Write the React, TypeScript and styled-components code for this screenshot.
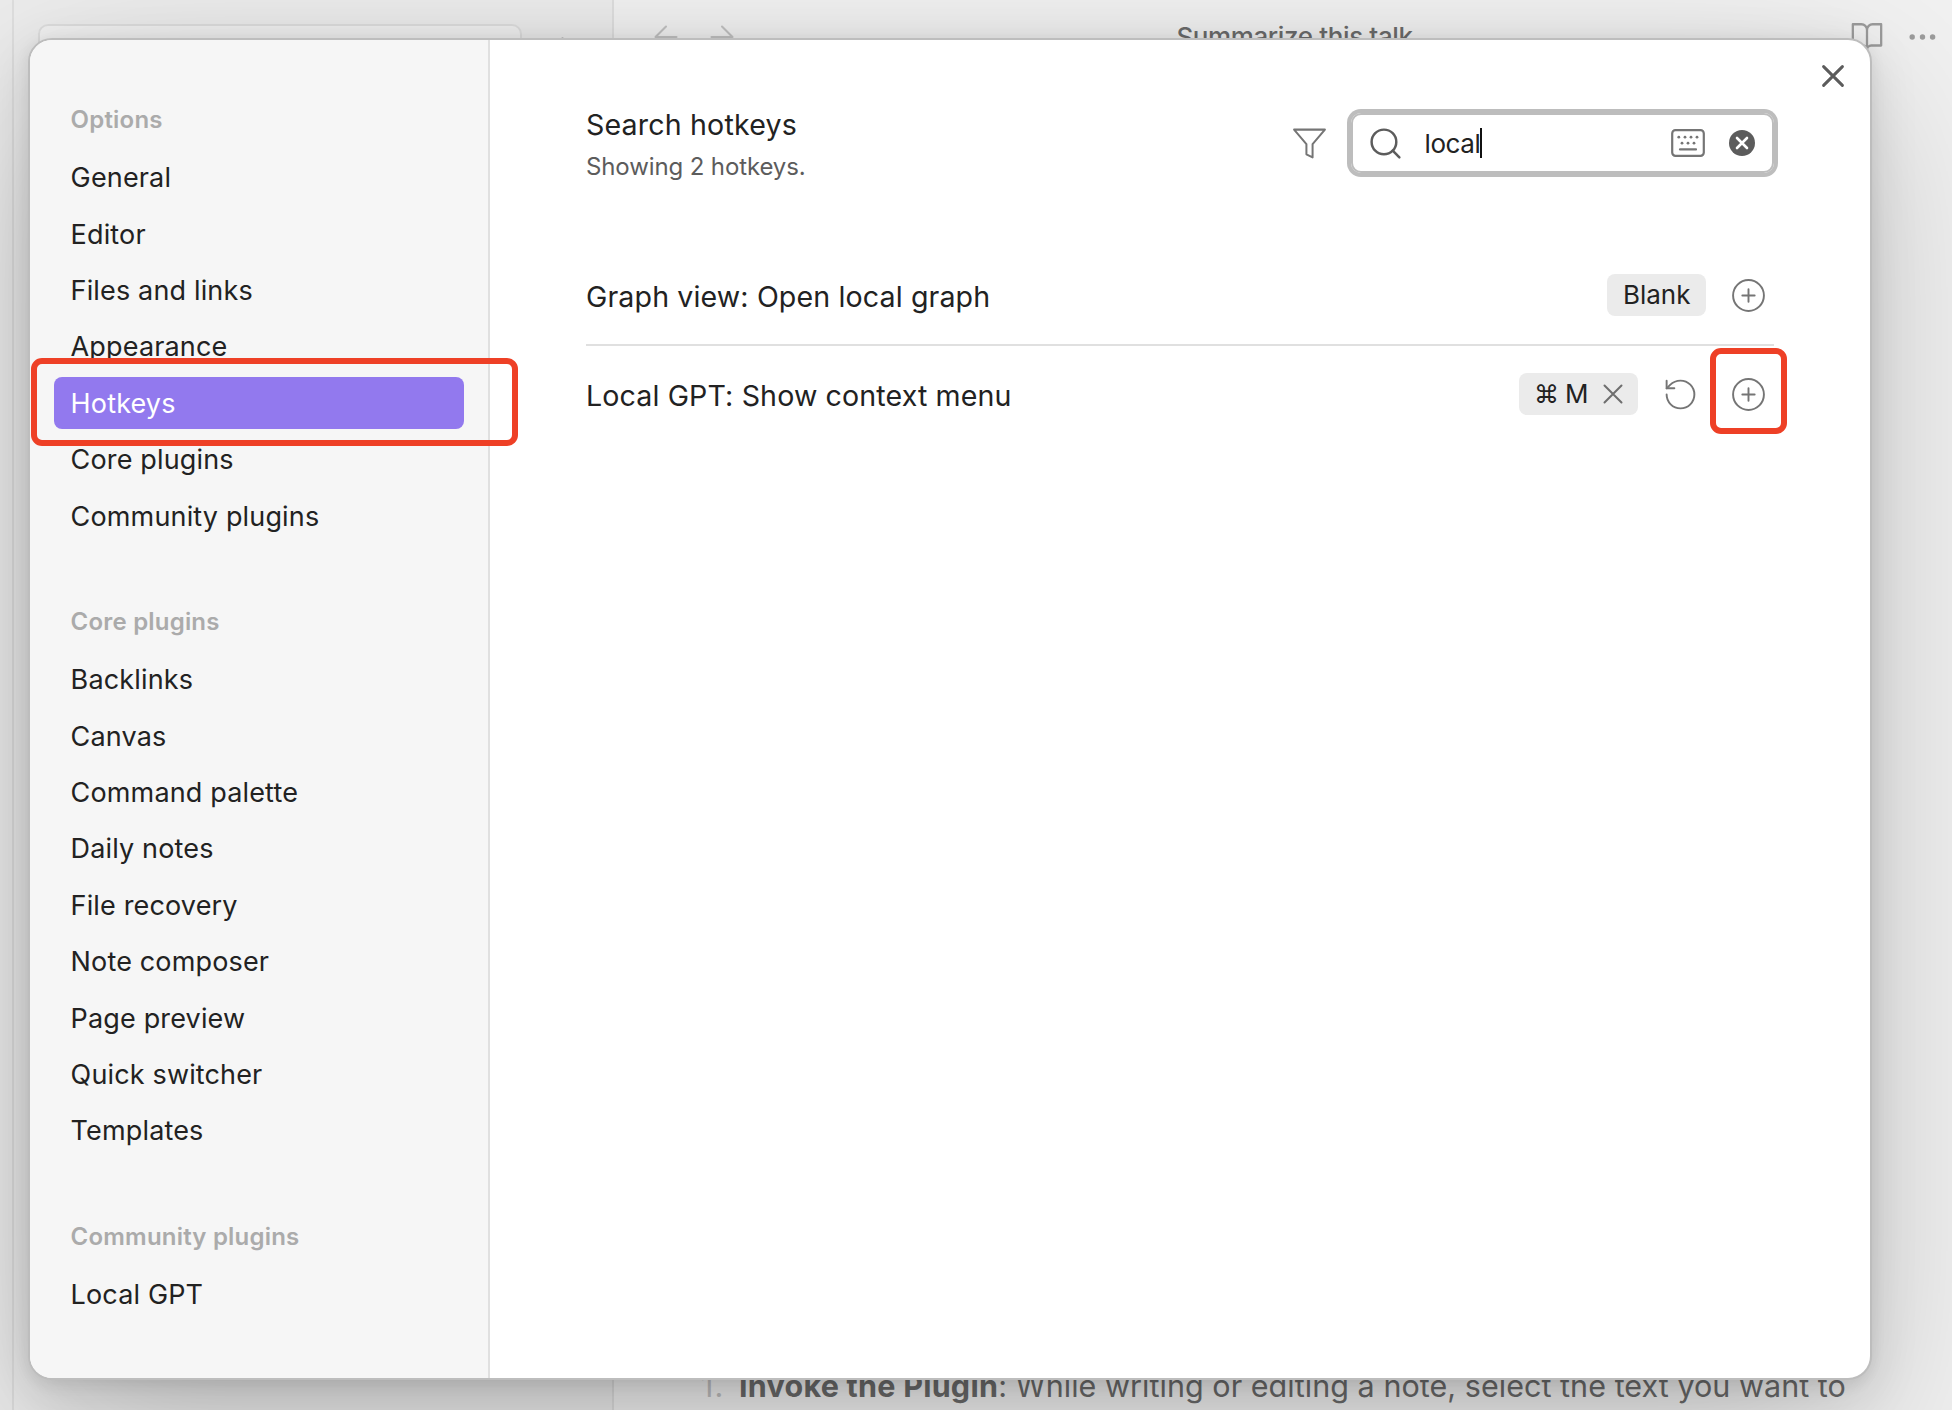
import React from 'react';
import styled, { createGlobalStyle } from 'styled-components';

const GlobalStyle = createGlobalStyle`
  *, *::before, *::after { box-sizing: border-box; }
  html, body { margin: 0; padding: 0; overflow: hidden; }
  body {
    font-family: Inter, "Liberation Sans", sans-serif;
    color: #222222;
    -webkit-font-smoothing: antialiased;
  }
  svg { display: block; flex: none; }
`;

/* ---------- workspace behind the dialog ---------- */

const Screen = styled.div`
  position: relative;
  width: 1952px;
  height: 1410px;
  overflow: hidden;
`;

const Workspace = styled.div`
  display: flex;
  height: 100%;
  background: #f1f1f1;
`;

const Ribbon = styled.div`
  width: 14px;
  background: #ececec;
  border-right: 2px solid #dedede;
`;

const FilePane = styled.div`
  display: flex;
  align-items: flex-start;
  gap: 32px;
  width: 600px;
  padding: 24px 0 0 24px;
  background: #ececec;
  border-right: 2px solid #dedede;
`;

const FileSearch = styled.div`
  width: 484px;
  height: 56px;
  border: 2px solid #dedede;
  border-radius: 10px;
  background: #f1f1f1;
`;

const CaseIcon = styled.svg`
  margin-top: 13px;
`;

const NotePane = styled.div`
  display: flex;
  flex: 1;
  flex-direction: column;
  justify-content: space-between;
`;

const NoteHeader = styled.div`
  display: flex;
  align-items: center;
  height: 74px;
  padding: 0 15px 0 34px;
`;

const NavArrows = styled.div`
  display: flex;
  gap: 20px;
  color: #c2c2c2;
`;

const NoteTitle = styled.div`
  flex: 1;
  margin-top: -1px;
  padding-right: 1px;
  text-align: center;
  font-size: 26px;
  font-weight: 500;
  letter-spacing: -0.38px;
  line-height: 36px;
  color: #6c6c6c;
`;

const NoteActions = styled.div`
  display: flex;
  align-items: center;
  gap: 23px;
  color: #9c9c9c;
`;

const NoteLine = styled.p`
  display: flex;
  margin: 0;
  padding-left: 87px;
  font-size: 30.5px;
  line-height: 49px;
  letter-spacing: 0.04px;
  white-space: pre;
  color: #6c6c6c;
`;

const ListNumber = styled.span`
  width: 38px;
  letter-spacing: 1.2px;
  color: #c0c0c0;
`;

const Strong = styled.strong`
  font-weight: 700;
  letter-spacing: 0.24px;
`;

/* ---------- dialog ---------- */

const Dialog = styled.div`
  position: absolute;
  left: 28px;
  top: 38px;
  display: flex;
  width: 1844px;
  height: 1342px;
  overflow: hidden;
  border: 2px solid #bdbdbd;
  border-radius: 24px;
  background: #ffffff;
  box-shadow:
    0 3.6px 14.6px rgba(0, 0, 0, 0.071),
    0 12.6px 49.4px rgba(0, 0, 0, 0.112),
    0 60px 180px rgba(0, 0, 0, 0.2);
`;

const Sidebar = styled.nav`
  display: flex;
  flex-direction: column;
  gap: 63.5px;
  width: 460px;
  padding: 63px 24px 0;
  background: #f6f6f6;
  border-right: 2px solid #e0e0e0;
`;

const Group = styled.section`
  display: flex;
  flex-direction: column;
  gap: 4.4px;
`;

const GroupTitle = styled.h2`
  height: 32px;
  margin: 0 0 11.8px;
  padding: 1px 0 0 16.6px;
  font-size: 24px;
  font-weight: 600;
  line-height: 32px;
  letter-spacing: 0.2px;
  color: #ababab;
`;

const Item = styled.div<{ $active?: boolean }>`
  height: 52px;
  padding: 1px 0 0 16.6px;
  border-radius: 8px;
  font-size: 27px;
  line-height: 52px;
  letter-spacing: 0.15px;
  color: ${p => (p.$active ? '#ffffff' : '#222222')};
  background: ${p => (p.$active ? '#9279ee' : 'transparent')};
`;

const Content = styled.main`
  display: flex;
  flex: 1;
  flex-direction: column;
  padding: 69px 96px 0;
`;

const SearchRow = styled.div`
  display: flex;
  align-items: center;
  height: 138px;
  padding-bottom: 70px;
`;

const SearchInfo = styled.div`
  flex: 1;
  padding-top: 3px;
`;

const SearchTitle = styled.div`
  font-size: 28.6px;
  line-height: 40px;
  letter-spacing: 0.16px;
`;

const SearchHint = styled.div`
  margin-top: 4px;
  font-size: 24px;
  line-height: 36px;
  letter-spacing: -0.12px;
  color: #5c5c5c;
`;

const FilterButton = styled.div`
  margin-right: 23.5px;
  color: #757575;
`;

const SearchField = styled.div`
  display: flex;
  align-items: center;
  width: 423px;
  height: 60px;
  padding: 0 17px 0 13.5px;
  border: 2px solid #bdbdbd;
  border-radius: 10px;
  box-shadow: 0 0 0 4px #bdbdbd;
`;

const SearchIcon = styled.div`
  color: #5c5c5c;
`;

const Query = styled.span`
  margin-left: 21px;
  padding-top: 2px;
  font-size: 26px;
  line-height: 36px;
  letter-spacing: -0.4px;
`;

const Caret = styled.span`
  width: 2px;
  height: 30px;
  background: #111111;
`;

const FieldIcons = styled.div`
  display: flex;
  align-items: center;
  gap: 24px;
  margin-left: auto;
`;

const HotkeyRow = styled.div<{ $divided?: boolean }>`
  display: flex;
  align-items: center;
  gap: 24px;
  height: ${p => (p.$divided ? 99 : 97)}px;
  padding: 0 7.5px 1px 0;
  border-top: ${p => (p.$divided ? '2px solid #e0e0e0' : '0')};
`;

const HotkeyList = styled.div`
  display: flex;
  flex-direction: column;
`;

const HotkeyName = styled.div`
  flex: 1;
  padding-top: 3px;
  font-size: 28.6px;
  line-height: 40px;
  letter-spacing: 0.12px;
`;

const RowActions = styled.div`
  display: flex;
  gap: 31px;
  color: #757575;
`;

const Chip = styled.div`
  display: flex;
  align-items: center;
  height: 42px;
  padding: 0 15px 0 15.5px;
  border-radius: 8px;
  background: #ebebeb;
  font-size: 26px;
  line-height: 42px;
`;

const KeyGlyph = styled.span`
  width: 31px;
  font-size: 25px;
`;

const ChipClose = styled.svg`
  margin-left: 14px;
`;

const CloseButton = styled.div`
  position: absolute;
  top: 24px;
  right: 25px;
  color: #5c5c5c;
`;

const Highlight = styled.div<{ $x: number; $y: number; $w: number; $h: number }>`
  position: absolute;
  left: ${p => p.$x}px;
  top: ${p => p.$y}px;
  width: ${p => p.$w}px;
  height: ${p => p.$h}px;
  border: 6px solid #ee4026;
  border-radius: 11px;
`;

/* ---------- icons ---------- */

type IconProps = { size?: number; weight?: number; children: React.ReactNode };

const Icon = ({ size = 37, weight = 1.25, children }: IconProps) => (
  <svg
    width={size}
    height={size}
    viewBox="0 0 24 24"
    fill="none"
    stroke="currentColor"
    strokeWidth={weight}
    strokeLinecap="round"
    strokeLinejoin="round"
  >
    {children}
  </svg>
);

const PlusCircle = () => (
  <Icon>
    <circle cx="12" cy="12" r="10" />
    <path d="M8 12h8M12 8v8" />
  </Icon>
);

const Restore = () => (
  <Icon>
    <path d="M3 12a9 9 0 1 0 9-9 9.75 9.75 0 0 0-6.74 2.74L3 8" />
    <path d="M3 3v5h5" />
  </Icon>
);

const KeyboardIcon = () => (
  <svg width="34" height="28" viewBox="0 0 34 28" fill="none" stroke="#757575">
    <rect x="1.2" y="1.2" width="31.6" height="25.6" rx="3.2" strokeWidth="2.2" />
    <path d="M9 20.4h16" strokeWidth="2.2" strokeLinecap="round" />
    <g fill="#757575" stroke="none">
      {[7.8, 14, 20, 26].map(x => <circle key={x} cx={x} cy="8.2" r="1.4" />)}
      {[11, 17, 23].map(x => <circle key={x} cx={x} cy="14.2" r="1.4" />)}
    </g>
  </svg>
);

const ClearIcon = () => (
  <svg width="26" height="26" viewBox="0 0 26 26">
    <circle cx="13" cy="13" r="13" fill="#5c5c5c" />
    <path d="M8 8l10 10M18 8L8 18" stroke="#fff" strokeWidth="2.6" strokeLinecap="round" />
  </svg>
);

/* ---------- data ---------- */

const groups = [
  {
    title: 'Options',
    items: ['General', 'Editor', 'Files and links', 'Appearance', 'Hotkeys', 'Core plugins', 'Community plugins'],
  },
  {
    title: 'Core plugins',
    items: [
      'Backlinks', 'Canvas', 'Command palette', 'Daily notes', 'File recovery',
      'Note composer', 'Page preview', 'Quick switcher', 'Templates',
    ],
  },
  { title: 'Community plugins', items: ['Local GPT'] },
];

export default function App() {
  return (
    <Screen>
      <GlobalStyle />
      <Workspace>
        <Ribbon />
        <FilePane>
          <FileSearch />
          <CaseIcon width="18" height="20" viewBox="0 0 18 20" fill="none" stroke="#c4c4c4" strokeWidth="2">
            <path d="M2 18L8.5 1 15 18" />
          </CaseIcon>
        </FilePane>
        <NotePane>
          <NoteHeader>
            <NavArrows>
              <Icon size={36} weight={1.4}>
                <path d="m12 19-7-7 7-7M19 12H5" />
              </Icon>
              <Icon size={36} weight={1.4}>
                <path d="M5 12h14M12 5l7 7-7 7" />
              </Icon>
            </NavArrows>
            <NoteTitle>Summarize this talk</NoteTitle>
            <NoteActions>
              <Icon size={34} weight={1.6}>
                <path d="M2 3h6a4 4 0 0 1 4 4v14a3 3 0 0 0-3-3H2zM22 3h-6a4 4 0 0 0-4 4v14a3 3 0 0 1 3-3h7z" />
              </Icon>
              <svg width="30" height="8" viewBox="0 0 30 8" fill="currentColor">
                <circle cx="5.2" cy="4" r="2.7" />
                <circle cx="15.5" cy="4" r="2.7" />
                <circle cx="25.6" cy="4" r="2.7" />
              </svg>
            </NoteActions>
          </NoteHeader>
          <NoteLine>
            <ListNumber>1.</ListNumber>
            <span>
              <Strong>Invoke the Plugin</Strong>: While writing or editing a note, select the text you want to
            </span>
          </NoteLine>
        </NotePane>
      </Workspace>

      <Dialog>
        <Sidebar>
          {groups.map(group => (
            <Group key={group.title}>
              <GroupTitle>{group.title}</GroupTitle>
              {group.items.map(item => (
                <Item key={item} $active={item === 'Hotkeys'}>{item}</Item>
              ))}
            </Group>
          ))}
        </Sidebar>
        <Content>
          <SearchRow>
            <SearchInfo>
              <SearchTitle>Search hotkeys</SearchTitle>
              <SearchHint>Showing 2 hotkeys.</SearchHint>
            </SearchInfo>
            <FilterButton>
              <Icon weight={1.3}>
                <path d="M22 3H2l8 9.46V19l4 2v-8.54z" />
              </Icon>
            </FilterButton>
            <SearchField>
              <SearchIcon>
                <Icon weight={1.6}>
                  <circle cx="11" cy="11" r="8" />
                  <path d="m21 21-4.3-4.3" />
                </Icon>
              </SearchIcon>
              <Query>local</Query>
              <Caret />
              <FieldIcons>
                <KeyboardIcon />
                <ClearIcon />
              </FieldIcons>
            </SearchField>
          </SearchRow>
          <HotkeyList>
            <HotkeyRow>
              <HotkeyName>Graph view: Open local graph</HotkeyName>
              <Chip>Blank</Chip>
              <RowActions>
                <PlusCircle />
              </RowActions>
            </HotkeyRow>
            <HotkeyRow $divided>
              <HotkeyName>Local GPT: Show context menu</HotkeyName>
              <Chip>
                <KeyGlyph>⌘</KeyGlyph>M
                <ChipClose width="20" height="20" viewBox="0 0 20 20" fill="none" stroke="#6e6e6e" strokeWidth="2" strokeLinecap="round">
                  <path d="M1.5 1.5l17 17M18.5 1.5l-17 17" />
                </ChipClose>
              </Chip>
              <RowActions>
                <Restore />
                <PlusCircle />
              </RowActions>
            </HotkeyRow>
          </HotkeyList>
        </Content>
        <CloseButton>
          <svg width="24" height="24" viewBox="0 0 24 24" fill="none" stroke="currentColor" strokeWidth="3" strokeLinecap="round">
            <path d="M2.6 2.6l18.8 18.8M21.4 2.6L2.6 21.4" />
          </svg>
        </CloseButton>
      </Dialog>

      <Highlight $x={31} $y={358} $w={487} $h={88} />
      <Highlight $x={1710} $y={348} $w={77} $h={86} />
    </Screen>
  );
}
